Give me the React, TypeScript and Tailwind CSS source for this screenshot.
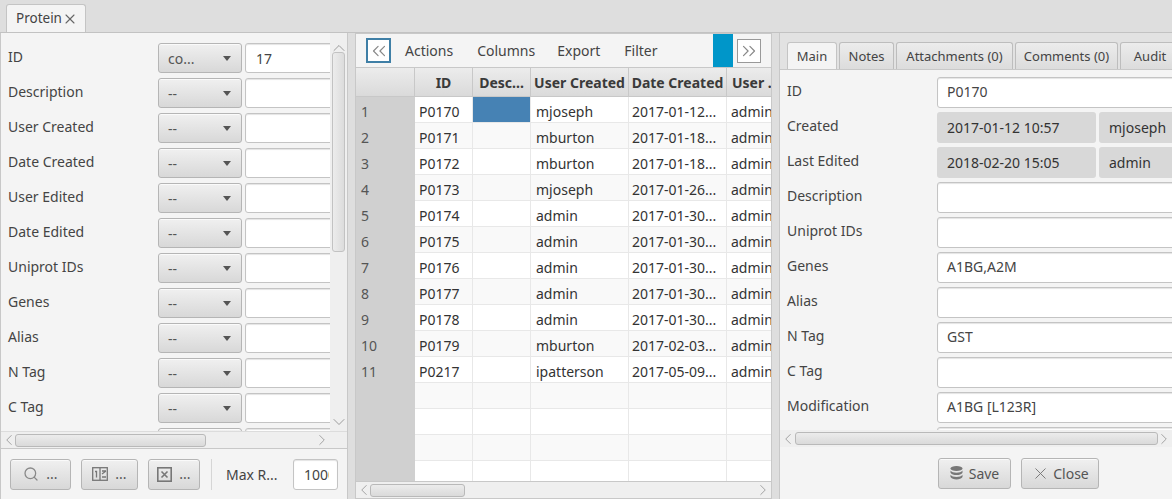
import { ChevronDown, ChevronLeft, ChevronRight, ChevronUp, ChevronsLeft, ChevronsRight, Search, X } from 'lucide-react';

const filterRows = [
  ['ID', 'co...', '17'],
  ['Description', '--', ''],
  ['User Created', '--', ''],
  ['Date Created', '--', ''],
  ['User Edited', '--', ''],
  ['Date Edited', '--', ''],
  ['Uniprot IDs', '--', ''],
  ['Genes', '--', ''],
  ['Alias', '--', ''],
  ['N Tag', '--', ''],
  ['C Tag', '--', ''],
  ['', '', ''],
];

const tableRows = [
  ['1', 'P0170', 'mjoseph', '2017-01-12...'],
  ['2', 'P0171', 'mburton', '2017-01-18...'],
  ['3', 'P0172', 'mburton', '2017-01-18...'],
  ['4', 'P0173', 'mjoseph', '2017-01-26...'],
  ['5', 'P0174', 'admin', '2017-01-30...'],
  ['6', 'P0175', 'admin', '2017-01-30...'],
  ['7', 'P0176', 'admin', '2017-01-30...'],
  ['8', 'P0177', 'admin', '2017-01-30...'],
  ['9', 'P0178', 'admin', '2017-01-30...'],
  ['10', 'P0179', 'mburton', '2017-02-03...'],
  ['11', 'P0217', 'ipatterson', '2017-05-09...'],
  ['', '', '', ''],
  ['', '', '', ''],
  ['', '', '', ''],
  ['', '', '', ''],
];

const detailRows: [string, string, string?][] = [
  ['ID', 'P0170'],
  ['Created', '2017-01-12 10:57', 'mjoseph'],
  ['Last Edited', '2018-02-20 15:05', 'admin'],
  ['Description', ''],
  ['Uniprot IDs', ''],
  ['Genes', 'A1BG,A2M'],
  ['Alias', ''],
  ['N Tag', 'GST'],
  ['C Tag', ''],
  ['Modification', 'A1BG [L123R]'],
  ['', ''],
];

const raised = 'rounded-[3px] border border-[#b5b5b5] bg-gradient-to-b from-[#f0f0f0] to-[#d8d8d8] shadow-[inset_0_1px_0_#fafafa]';
const field = 'rounded-[3px] border border-[#c4c4c4] bg-white shadow-[inset_0_1px_1px_#e4e4e4]';

function HScroll({ thumb, className, rightGap }: { thumb: string; className: string; rightGap: string }) {
  return (
    <div className={`flex h-[17px] shrink-0 items-center bg-[#efefef] ${className}`}>
      <span className="ml-[2px] flex w-3 shrink-0 justify-center">
        <ChevronLeft className="shrink-0 text-[#8a8a8a]" size={18} strokeWidth={1} />
      </span>
      <div className={`h-[13px] rounded-[3px] border border-[#b9b9b9] bg-gradient-to-b from-[#ececec] to-[#dadada] ${thumb}`} />
      <div className="flex-1" />
      <span className={`flex w-3 shrink-0 justify-center ${rightGap}`}>
        <ChevronRight className="shrink-0 text-[#8a8a8a]" size={18} strokeWidth={1} />
      </span>
    </div>
  );
}

function ToolButton({ width, children }: { width: string; children: React.ReactNode }) {
  return (
    <div className={`flex h-[31px] items-center justify-center gap-[7px] text-[#555] ${raised} ${width}`}>
      {children}
      <span className="text-[14px] leading-none">...</span>
    </div>
  );
}

export default function App() {
  return (
    <div className="flex h-[499px] w-[1172px] flex-col overflow-hidden bg-[#dedede] font-['Noto_Sans','Open_Sans',sans-serif] text-[14px] text-[#333]">
      <div className="flex h-[33px] shrink-0 items-end border-b border-[#c2c2c2] pl-[6px]">
        <div className="flex h-[28px] w-[80px] items-center rounded-t-[3px] border border-b-0 border-[#c4c4c4] bg-[#f4f4f4] pl-[9px] text-[13.5px] text-[#444]">
          Protein
          <X size={16} strokeWidth={1.6} className="shrink-0 text-[#666]" />
        </div>
      </div>

      <div className="flex min-h-0 flex-1">
        <div className="flex w-[348px] shrink-0 flex-col border-x border-[#c8c8c8] bg-[#f4f4f4]">
          <div className="flex min-h-0 flex-1 overflow-hidden">
            <div className="flex w-[329px] shrink-0 flex-col gap-[5px] overflow-hidden pt-[10px]">
              {filterRows.map(([label, op, value], i) => (
                <div key={i} className="flex h-[30px] shrink-0 items-start">
                  <div className="w-[157px] shrink-0 pl-[7px] leading-[28px] text-[#444]">{label}</div>
                  <div className={`flex h-[30px] w-[84px] shrink-0 items-center justify-between pl-[9px] pr-[10px] text-[#555] ${raised}`}>
                    {op}
                    <span className="h-0 w-0 border-x-[4.5px] border-t-[5px] border-x-transparent border-t-[#555]" />
                  </div>
                  <div className={`ml-[3px] flex h-[30px] w-[90px] shrink-0 items-center pl-[10px] text-[#444] ${field}`}>{value}</div>
                </div>
              ))}
            </div>
            <div className="flex w-[17px] shrink-0 flex-col items-center bg-[#efefef] pt-[9px]">
              <ChevronUp size={20} strokeWidth={1} className="-my-[4px] shrink-0 text-[#8a8a8a]" />
              <div className="mt-[-2px] h-[200px] w-[13px] shrink-0 rounded-[3px] border border-[#c2c2c2] bg-gradient-to-r from-[#ececec] to-[#dcdcdc]" />
              <div className="flex-1" />
              <ChevronDown size={20} strokeWidth={1} className="-mt-[4px] mb-[-1px] shrink-0 text-[#8a8a8a]" />
            </div>
          </div>
          <HScroll thumb="w-[191px]" className="border-t border-[#dcdcdc]" rightGap="mr-[19px]" />
          <div className="flex h-[51px] shrink-0 items-center border-t border-[#c8c8c8] pl-[9px]">
            <div className="flex gap-[10px]">
              <ToolButton width="w-[61px]"><Search size={16} strokeWidth={1.9} className="text-[#888]" /></ToolButton>
              <ToolButton width="w-[57px]">
                <svg width="16" height="14" viewBox="0 0 16 14" fill="none" stroke="#777" strokeWidth="1.3">
                  <rect x="0.7" y="0.7" width="14.6" height="12.6" />
                  <path d="M8 1v12M3 4.500h1.500v6M10 4h4M14 4l-4 3M10 10h4" />
                </svg>
              </ToolButton>
              <ToolButton width="w-[52px]">
                <svg width="15" height="15" viewBox="0 0 15 15" fill="none" stroke="#777" strokeWidth="1.6">
                  <rect x="0.8" y="0.8" width="13.4" height="13.4" />
                  <path d="M4.500 4.500l6 6M10.500 4.500l-6 6" />
                </svg>
              </ToolButton>
            </div>
            <div className="ml-[11px] h-[31px] w-px bg-[#d6d6d6]" />
            <span className="ml-[14px] w-[67px] text-[#444]">Max R...</span>
            <div className={`flex h-[31px] w-[45px] items-center pl-[10px] text-[#444] ${field}`}>
              <span className="w-[25px] overflow-hidden whitespace-nowrap">1000</span>
            </div>
          </div>
        </div>

        <div className="w-[7px] shrink-0 bg-[#dedede]" />

        <div className="flex w-[417px] shrink-0 flex-col border border-[#c8c8c8] bg-white">
          <div className="flex h-[33px] shrink-0 items-center bg-[#f4f4f4] pl-[10px] text-[#444]">
            <div className="flex h-[25px] w-[25px] items-center justify-center border-2 border-[#3f7fa6] bg-white">
              <ChevronsLeft size={22} strokeWidth={1.3} className="shrink-0 text-[#888]" />
            </div>
            <span className="ml-[14px]">Actions</span>
            <span className="ml-[24px]">Columns</span>
            <span className="ml-[22px]">Export</span>
            <span className="ml-[24px]">Filter</span>
            <div className="ml-[55px] h-[33px] w-[20px] bg-[#0096c9]" />
            <div className="ml-[4px] flex h-[24px] w-[24px] items-center justify-center border border-[#999] bg-white">
              <ChevronsRight size={22} strokeWidth={1.3} className="shrink-0 text-[#888]" />
            </div>
          </div>

          <div className="flex h-[30px] shrink-0 border-y border-[#c8c8c8] bg-gradient-to-b from-[#ececec] to-[#dadada] font-bold text-[#3a3a3a]">
            <div className="w-[59px] shrink-0 border-r border-[#c8c8c8]" />
            <div className="w-[58px] shrink-0 border-r border-[#c8c8c8] text-center leading-[30px]">ID</div>
            <div className="w-[58px] shrink-0 border-r border-[#c8c8c8] text-center leading-[30px]">Desc...</div>
            <div className="w-[98px] shrink-0 overflow-hidden whitespace-nowrap border-r border-[#c8c8c8] text-center leading-[30px]">User Created</div>
            <div className="w-[98px] shrink-0 overflow-hidden whitespace-nowrap border-r border-[#c8c8c8] text-center leading-[30px]">Date Created</div>
            <div className="flex-1 overflow-hidden whitespace-nowrap pl-[5px] leading-[30px]">User .</div>
          </div>

          <div className="min-h-0 flex-1 overflow-hidden">
            {tableRows.map(([num, id, user, date], i) => (
              <div key={i} className={`flex h-[26px] leading-[30px] text-[#333] ${i % 2 === 1 ? 'bg-[#f9f9f9]' : 'bg-white'}`}>
                <div className="w-[59px] shrink-0 bg-[#d0d0d0] pl-[5px] text-[#555]">{num}</div>
                <div className="flex min-w-0 flex-1 border-b border-[#e8e8e8]">
                  <div className="w-[58px] shrink-0 border-r border-[#e8e8e8] pl-[4px]">{id}</div>
                  <div className={`w-[58px] shrink-0 border-r border-[#e8e8e8] ${i === 0 ? 'bg-[#4682b4]' : ''}`} />
                  <div className="w-[98px] shrink-0 border-r border-[#e8e8e8] pl-[5px]">{user}</div>
                  <div className="w-[98px] shrink-0 overflow-hidden whitespace-nowrap border-r border-[#e8e8e8] pl-[3px]">{date}</div>
                  <div className="flex-1 overflow-hidden pl-[4px]">{num ? 'admin' : ''}</div>
                </div>
              </div>
            ))}
          </div>
          <HScroll thumb="w-[95px]" className="border-t border-[#c8c8c8]" rightGap="mr-[2px]" />
        </div>

        <div className="w-[7px] shrink-0 bg-[#dedede]" />

        <div className="flex min-w-0 flex-1 flex-col border-l border-[#c8c8c8] bg-[#f4f4f4]">
          <div className="flex h-[37px] shrink-0 items-end gap-[2px] border-b border-[#c8c8c8] bg-[#e2e2e2] pl-[7px] text-[13px] text-[#444]">
            <div className="flex h-[27px] w-[50px] shrink-0 items-center justify-center rounded-t-[3px] border border-b-0 border-[#c4c4c4] bg-[#f4f4f4] pt-[1px]">Main</div>
            {['Notes', 'Attachments (0)', 'Comments (0)', 'Audit'].map((tab, i) => (
              <div key={tab} className={`flex h-[27px] shrink-0 items-center justify-center rounded-t-[3px] border border-b-0 border-[#bdbdbd] bg-gradient-to-b from-[#ececec] to-[#dcdcdc] pt-[1px] ${['w-[55px]', 'w-[117px]', 'w-[103px]', 'w-[60px]'][i]}`}>{tab}</div>
            ))}
          </div>
          <div className="flex min-h-0 flex-1 flex-col gap-[5px] overflow-hidden pt-[7px]">
            {detailRows.map(([label, value, extra], i) => (
              <div key={i} className="flex h-[30px] shrink-0 items-start">
                <div className="w-[157px] shrink-0 pl-[7px] leading-[28px] text-[#444]">{label}</div>
                {extra ? (
                  <>
                    <div className="flex h-[31px] w-[159px] shrink-0 items-center rounded-[3px] bg-[#d8d8d8] pl-[10px] text-[#333]">{value}</div>
                    <div className="ml-[3px] flex h-[31px] w-[90px] shrink-0 items-center rounded-[3px] bg-[#d8d8d8] pl-[10px] text-[#333]">{extra}</div>
                  </>
                ) : (
                  <div className={`flex h-[31px] w-[300px] shrink-0 items-center pb-[2px] pl-[9px] text-[#444] ${field}`}>{value}</div>
                )}
              </div>
            ))}
          </div>
          <HScroll thumb="ml-[1px] w-[366px]" className="" rightGap="mr-[2px]" />
          <div className="flex h-[52px] shrink-0 items-center gap-[10px] pl-[158px] text-[#555]">
            <div className={`flex h-[31px] w-[73px] items-center justify-center gap-[6px] ${raised}`}>
              <svg width="13" height="14" viewBox="0 0 13 14" fill="#777">
                <ellipse cx="6.5" cy="2.5" rx="6" ry="2.5" />
                <path d="M0.5 4.5c1 1.6 3.4 2.2 6 2.2s5-.6 6-2.2v2.2c-.8 1.6-3.4 2.3-6 2.3s-5.200-.7-6-2.300zM0.500 8.700c1 1.600 3.400 2.200 6 2.200s5-.6 6-2.200v2.400c-.8 1.700-3.400 2.400-6 2.400s-5.200-.7-6-2.400z" />
              </svg>
              Save
            </div>
            <div className={`flex h-[31px] w-[78px] items-center justify-center gap-[3px] ${raised}`}>
              <X size={19} strokeWidth={1.2} className="shrink-0 text-[#777]" />
              Close
            </div>
          </div>
        </div>
      </div>
    </div>
  );
}
